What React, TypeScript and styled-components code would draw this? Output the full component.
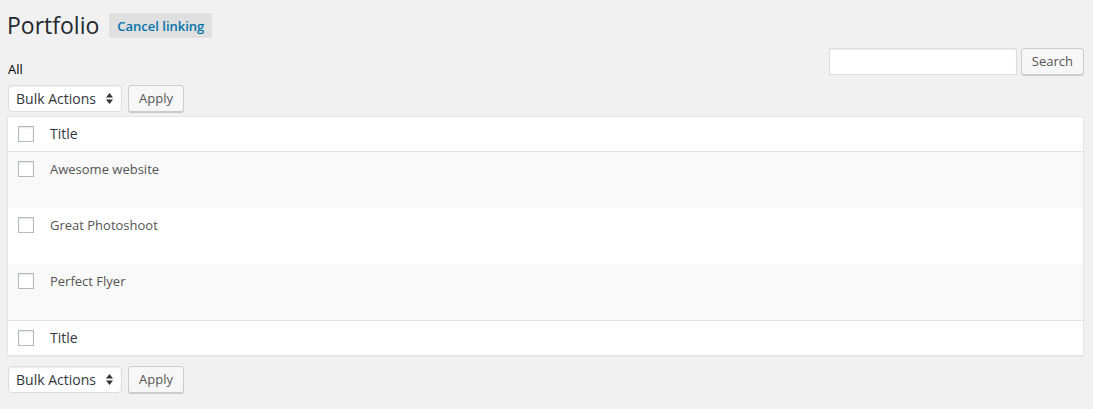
import React from "react";
import styled, { createGlobalStyle } from "styled-components";

const GlobalStyle = createGlobalStyle`
    body {
        margin: 0;
        background: #f1f1f1;
        font-family: "Open Sans", "Liberation Sans", sans-serif;
        color: #444;
    }
`;

const Page = styled.div`
    padding: 13px 9px 16px 7px;
`;

const Header = styled.div`
    display: flex;
    align-items: center;
    gap: 10px;
    height: 25px;
`;

const PageTitle = styled.h1`
    margin: 0;
    font-size: 23px;
    font-weight: 400;
    line-height: 25px;
    color: #23282d;
`;

const LinkButton = styled.button`
    height: 25px;
    padding: 0 8px;
    border: none;
    border-radius: 2px;
    background: #e0e0e0;
    color: #0073aa;
    font-family: inherit;
    font-size: 13px;
    font-weight: 600;
`;

const FilterBar = styled.div`
    display: flex;
    justify-content: space-between;
    align-items: flex-start;
    height: 27px;
    margin-top: 10px;
`;

const Views = styled.div`
    margin-top: 12px;
    padding-left: 1px;
    font-size: 13px;
    line-height: 18px;
    font-weight: 500;
    color: #000;
`;

const SearchBox = styled.div`
    display: flex;
    gap: 4px;
`;

const SearchInput = styled.input`
    width: 186px;
    height: 25px;
    padding: 0;
    margin: 0;
    border: 1px solid #ddd;
    box-shadow: inset 0 1px 2px rgba(0, 0, 0, 0.07);
    background: #fff;
`;

const Button = styled.button`
    height: 27px;
    padding: 0 10px;
    border: 1px solid #ccc;
    border-radius: 3px;
    background: #f7f7f7;
    box-shadow: 0 1px 0 #ccc;
    color: #555;
    font-family: inherit;
    font-size: 13px;
    line-height: 25px;
`;

const TableNav = styled.div`
    display: flex;
    gap: 6px;
    margin-top: 10px;
    padding-left: 1px;
`;

const Select = styled.div`
    display: flex;
    align-items: center;
    justify-content: space-between;
    box-sizing: border-box;
    width: 114px;
    height: 27px;
    padding: 0 8px 0 7px;
    border: 1px solid #ddd;
    border-radius: 4px;
    background: #fff;
    box-shadow: inset 0 1px 2px rgba(0, 0, 0, 0.07);
    color: #32373c;
    font-size: 14px;
`;

const Table = styled.div`
    margin-top: 4px;
    border: 1px solid #e5e5e5;
    background: #fff;
    box-shadow: 0 1px 1px rgba(0, 0, 0, 0.04);
`;

const HeadRow = styled.div<{ $foot?: boolean }>`
    display: flex;
    align-items: flex-start;
    height: 35px;
    padding-top: 9px;
    box-sizing: border-box;
    ${(p) => (p.$foot ? "border-top: 1px solid #e1e1e1;" : "border-bottom: 1px solid #e1e1e1;")}
`;

const Row = styled.div<{ $alt: boolean }>`
    display: flex;
    align-items: flex-start;
    height: 56px;
    box-sizing: border-box;
    padding-top: 9px;
    background: ${(p) => (p.$alt ? "#f9f9f9" : "#fff")};
`;

const Check = styled.span`
    display: block;
    box-sizing: border-box;
    width: 16px;
    height: 16px;
    margin: 0 16px 0 10px;
    border: 1px solid #b4b9be;
    background: #fff;
    box-shadow: inset 0 1px 2px rgba(0, 0, 0, 0.1);
`;

const Cell = styled.span<{ $head?: boolean }>`
    font-size: ${(p) => (p.$head ? "14px" : "13px")};
    line-height: 16px;
    color: ${(p) => (p.$head ? "#32373c" : "#555")};
`;

const items = ["Awesome website", "Great Photoshoot", "Perfect Flyer"];

const SelectArrows = () => (
    <svg width="7" height="11" viewBox="0 0 7 11">
        <path d="M3.5 0 L7 4.5 H0 Z M0 6.5 H7 L3.5 11 Z" fill="#333" />
    </svg>
);

const BulkActions = () => (
    <TableNav>
        <Select>
            Bulk Actions
            <SelectArrows />
        </Select>
        <Button>Apply</Button>
    </TableNav>
);

const App = (): React.ReactElement => (
    <Page>
        <GlobalStyle />
        <Header>
            <PageTitle>Portfolio</PageTitle>
            <LinkButton>Cancel linking</LinkButton>
        </Header>
        <FilterBar>
            <Views>All</Views>
            <SearchBox>
                <SearchInput />
                <Button>Search</Button>
            </SearchBox>
        </FilterBar>
        <BulkActions />
        <Table>
            <HeadRow>
                <Check />
                <Cell $head>Title</Cell>
            </HeadRow>
            {items.map((name, i) => (
                <Row key={name} $alt={i % 2 === 0}>
                    <Check />
                    <Cell>{name}</Cell>
                </Row>
            ))}
            <HeadRow $foot>
                <Check />
                <Cell $head>Title</Cell>
            </HeadRow>
        </Table>
        <BulkActions />
    </Page>
);

export default App;
